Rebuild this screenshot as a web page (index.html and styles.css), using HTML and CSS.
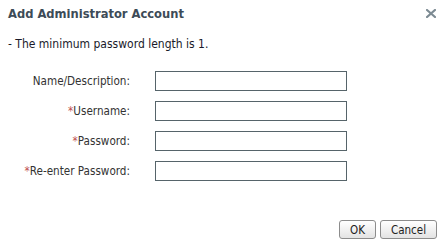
FILE: index.html
```html
<!DOCTYPE html>
<html>
<head>
<meta charset="utf-8">
<link rel="stylesheet" href="styles.css">
</head>
<body>
<div class="dialog">
  <div class="header">
    <span class="title">Add Administrator Account</span>
    <svg class="close" width="10" height="9" viewBox="0 0 10 9"><path d="M1 1 L9 8 M9 1 L1 8" stroke="#7d8b93" stroke-width="2.2" stroke-linecap="square"/></svg>
  </div>
  <div class="note">- The minimum password length is 1.</div>
  <div class="form">
    <label class="lbl">Name/Description:</label><input class="field" type="text">
    <label class="lbl"><span class="req">*</span>Username:</label><input class="field" type="text">
    <label class="lbl"><span class="req">*</span>Password:</label><input class="field" type="password">
    <label class="lbl"><span class="req">*</span>Re-enter Password:</label><input class="field" type="password">
  </div>
  <div class="actions">
    <button class="btn ok">OK</button>
    <button class="btn cancel">Cancel</button>
  </div>
</div>
</body>
</html>
```
FILE: styles.css
```css
html, body { margin: 0; padding: 0; background: #fff; }
body { font-family: "DejaVu Sans Condensed", "DejaVu Sans", sans-serif; font-size: 11px; color: #222; }
.dialog { width: 448px; height: 250px; box-sizing: border-box; display: flex; flex-direction: column; }
.header { display: flex; justify-content: space-between; align-items: center; padding: 4px 12px 0 8px; height: 18px; }
.title { font-weight: bold; font-size: 12.8px; color: #3d4b57; }
.close { display: block; margin-top: 1px; }
.note { margin: 15px 0 0 8px; font-size: 12px; color: #1a1a2a; }
.form { display: grid; grid-template-columns: 130px 192px; column-gap: 25px; row-gap: 10px; margin-top: 20px; align-items: center; }
.lbl { text-align: right; color: #333; font-size: 11.6px; }
.req { color: #c0504d; }
.field { box-sizing: border-box; width: 192px; height: 20px; margin: 0; border: 1px solid #56646a; padding: 0 3px; font: inherit; outline: none; }
.actions { display: flex; justify-content: flex-end; gap: 4px; margin-top: auto; padding: 0 11px 11px 0; }
.btn { box-sizing: border-box; height: 19px; padding: 0 9px; border: 1px solid #8c8c8c; border-radius: 3px; background: linear-gradient(#ffffff, #e3e3e3); font: inherit; font-size: 11.5px; color: #222; }
.ok { width: 37px; }
.cancel { width: 57px; }
```
